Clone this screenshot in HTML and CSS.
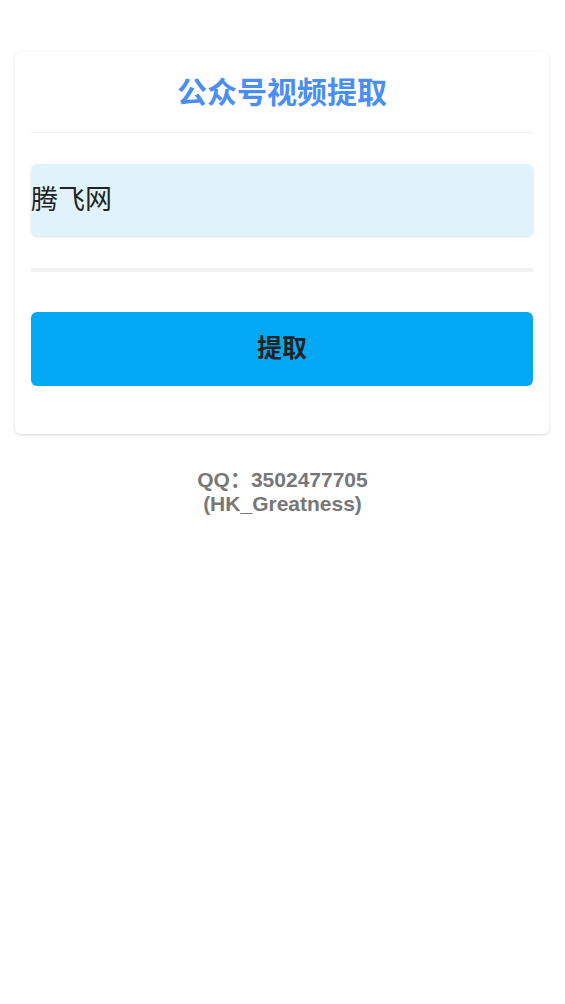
FILE: index.html
```html
<!DOCTYPE html>
<html lang="zh-CN">
<head>
<meta charset="utf-8">
<title>公众号视频提取</title>
<link rel="stylesheet" href="styles.css">
</head>
<body>
<div class="card">
  <h1 class="title">公众号视频提取</h1>
  <div class="divider"></div>
  <div class="input">腾飞网</div>
  <div class="bar"></div>
  <button class="btn">提取</button>
</div>
<div class="footer">
  <div>QQ：3502477705</div>
  <div>(HK_Greatness)</div>
</div>
</body>
</html>
```
FILE: styles.css
```css
html, body {
  margin: 0;
  padding: 0;
  background: #fff;
}
body {
  font-family: "Liberation Sans", "Noto Sans CJK SC", sans-serif;
}
.card {
  margin: 52px 16px 0 15px;
  padding: 16px 16px 48px 16px;
  border-radius: 6px;
  background: #fff;
  box-shadow: 0 1px 3px rgba(0,0,0,0.16);
}
.title {
  margin: 0;
  text-align: center;
  font-size: 30px;
  line-height: 44px;
  font-weight: bold;
  color: #4a8ef2;
  font-family: "Noto Sans CJK SC", sans-serif;
}
.divider {
  margin-top: 20px;
  height: 1px;
  background: #eeeeee;
}
.input {
  margin-top: 31px;
  height: 72px;
  box-sizing: border-box;
  padding-bottom: 6px;
  background: #e0f3fc;
  border-radius: 6px;
  box-shadow: 0 1px 3px rgba(0,0,0,0.12);
  display: flex;
  align-items: center;
  font-size: 27px;
  color: #222;
  font-family: "Noto Sans CJK SC", sans-serif;
  font-weight: 400;
}
.bar {
  margin-top: 32px;
  height: 4px;
  background: #f1f1f1;
}
.btn {
  display: block;
  width: 100%;
  margin-top: 40px;
  height: 74px;
  padding: 0 0 6px 0;
  border: none;
  border-radius: 6px;
  background: #03a9f4;
  color: #222;
  font-size: 25px;
  font-weight: bold;
  font-family: "Noto Sans CJK SC", sans-serif;
}
.footer {
  margin-top: 34px;
  text-align: center;
  font-size: 21px;
  line-height: 24px;
  font-weight: bold;
  color: #777;
}
```
